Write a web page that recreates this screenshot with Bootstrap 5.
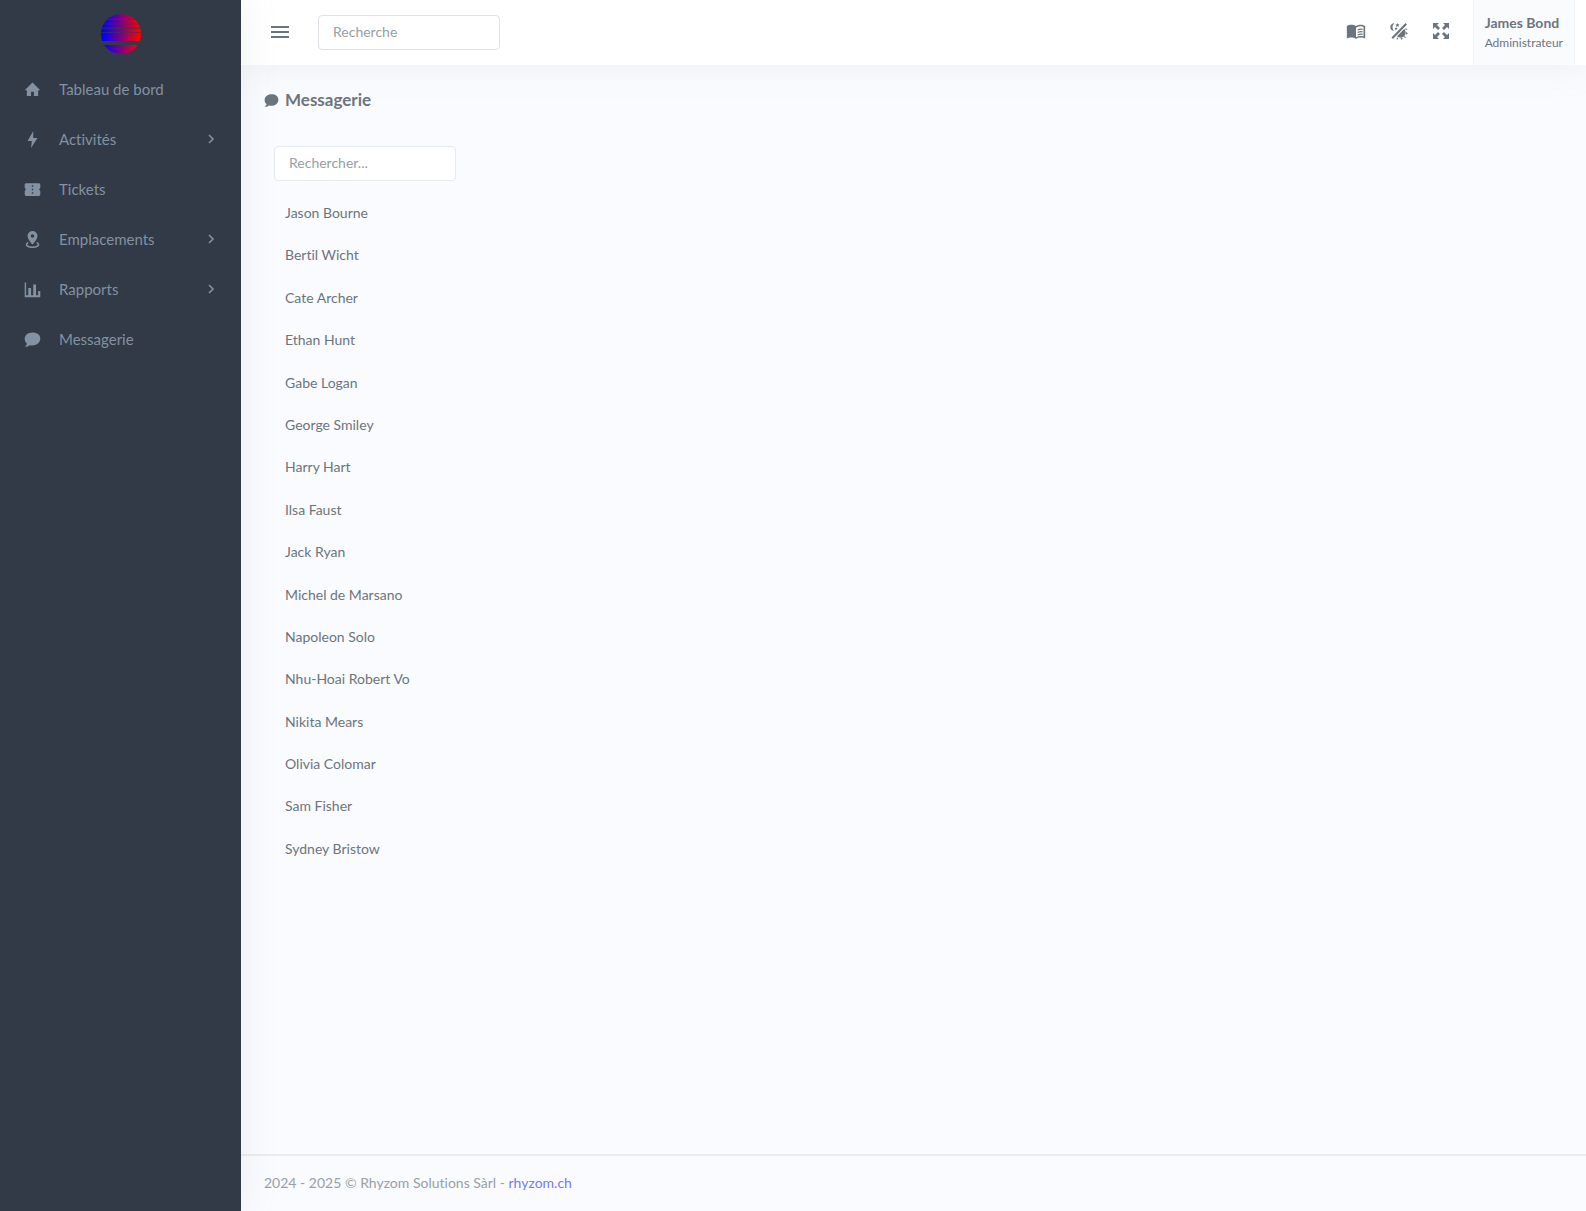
<!DOCTYPE html>
<html lang="fr">
<head>
<meta charset="utf-8">
<meta name="viewport" content="width=device-width, initial-scale=1">
<title>Messagerie</title>
<link href="https://cdn.jsdelivr.net/npm/bootstrap@5.3.0/dist/css/bootstrap.min.css" rel="stylesheet">
<style>
body{font-family:Lato,"Liberation Sans",sans-serif;font-size:14px;font-variant-ligatures:none;color:#6c757d;background:#fafbfe}
svg{display:block;fill:currentColor;flex:none}
.side-panel{width:241px;background:#313a46;box-shadow:0 0 35px rgba(154,161,171,.15);z-index:2;flex:none}
.brand-link{height:64px;padding-top:14px}
.side-link{height:50px;padding:0 22px 0 24px;gap:18px;font-size:15px;color:#8391a2;text-decoration:none}
.side-link:hover{color:#bccee4}
.top-panel{height:65px;padding:0 11px 0 29px;background:#fff;box-shadow:0 0 35px rgba(154,161,171,.15)}
.form-control{width:182px;height:35px;padding:0 14px 2px;font-size:14px;border-color:#dee2e6;border-radius:4px}
.form-control::placeholder{color:#98a0a6}
.people .form-control{border-color:#e6e9ee}
.icon-btn{background:none;border:0;padding:0 0 3px;color:#6c757d}
.tools{gap:24px;margin-right:23px}
.user-link{padding:0 11px;background:#fafbfd;border:solid #f1f3fa;border-width:0 1px;color:#6c757d;text-decoration:none}
.user-name{font-size:14px;line-height:20px}
.user-role{font-size:12px;line-height:20px}
.page-title{font-size:17px;line-height:22px;gap:6px;margin:24px 23px 35px}
.people{padding:0 33px}
.people-list{margin:11px}
.people-list a{display:block;line-height:1.6;padding:10px 0;color:#6c757d;text-decoration:none}
.page-foot{padding:16px 23px 17px;border-top:2px solid #e9ecf1;line-height:22px;color:#98a0a6}
.page-foot a{color:#727cf5;text-decoration:none}
</style>
<script src="https://cdn.jsdelivr.net/npm/bootstrap@5.3.0/dist/js/bootstrap.bundle.min.js"></script>
</head>
<body>
<div class="d-flex min-vh-100">
<aside class="side-panel position-relative">
<a href="#" class="brand-link d-flex justify-content-center" aria-label="Accueil">
<svg width="40" height="40" viewBox="0 0 40 40"><defs><linearGradient id="sun"><stop offset="0.05" stop-color="#00f"/><stop offset="0.95" stop-color="#f00"/></linearGradient><clipPath id="disc"><circle cx="20" cy="20" r="20"/></clipPath></defs><g clip-path="url(#disc)"><path fill="url(#sun)" d="M0 0H40V27H0ZM0 31H40V40H0Z"/><path fill="#313a46" opacity=".6" d="M0 5H40V6H0ZM0 9.500H40V10.500H0ZM0 13.500H40V15H0ZM0 18H40V19H0Z"/></g></svg></a>
<nav aria-label="Menu principal">
<a href="#" class="side-link d-flex align-items-center"><svg width="17" height="17" viewBox="0 0 24 24"><path d="M10 21v-6h4v6h6v-8h3L12 2 1 13h3v8z"/></svg>Tableau de bord</a>
<a href="#" class="side-link d-flex align-items-center"><svg width="17" height="17" viewBox="0 0 24 24"><path d="M13 0 5 14h6l-1 10 9-14h-6z"/></svg><span class="flex-grow-1">Activités</span><svg width="16" height="16" viewBox="0 0 16 16"><path d="m6 4 4 4-4 4" fill="none" stroke="currentColor" stroke-width="1.600"/></svg></a>
<a href="#" class="side-link d-flex align-items-center"><svg width="17" height="17" viewBox="0 0 24 24"><path fill-rule="evenodd" d="M3 3H21Q23 3 23 5V10Q20 12 23 14V19Q23 21 21 21H3Q1 21 1 19V14Q4 12 1 10V5Q1 3 3 3ZM11 6V8H13V6ZM11 11V13H13V11ZM11 16V18H13V16Z"/></svg>Tickets</a>
<a href="#" class="side-link d-flex align-items-center"><svg width="17" height="17" viewBox="0 0 24 24"><path fill-rule="evenodd" d="M12 0a7 7 0 0 1 7 7c0 5-7 12-7 12S5 12 5 7a7 7 0 0 1 7-7Zm0 4.500a2.500 2.500 0 1 0 0 5 2.500 2.500 0 1 0 0-5Z"/><path d="M6 16C0 20 6 23 12 23S24 20 18 16" fill="none" stroke="currentColor" stroke-width="2.200"/></svg><span class="flex-grow-1">Emplacements</span><svg width="16" height="16" viewBox="0 0 16 16"><path d="m6 4 4 4-4 4" fill="none" stroke="currentColor" stroke-width="1.600"/></svg></a>
<a href="#" class="side-link d-flex align-items-center"><svg width="17" height="17" viewBox="0 0 24 24"><path d="M1 2h2v18h3V10h4v10h3V5h4v15h3v-6h3v9H1z"/></svg><span class="flex-grow-1">Rapports</span><svg width="16" height="16" viewBox="0 0 16 16"><path d="m6 4 4 4-4 4" fill="none" stroke="currentColor" stroke-width="1.600"/></svg></a>
<a href="#" class="side-link d-flex align-items-center"><svg width="17" height="17" viewBox="0 0 24 24"><path d="M12 2C5.500 2 1 6 1 11c0 3 1 5 3 6.500C4 19 3 20.500 1 22c3 .5 5.500-.5 7-2 8 2 15-3 15-9S18.500 2 12 2Z"/></svg>Messagerie</a>
</nav>
</aside>
<div class="flex-grow-1 d-flex flex-column">
<header class="top-panel d-flex align-items-center">
<button class="icon-btn me-4" type="button" aria-label="Menu"><svg width="20" height="20" viewBox="0 0 20 20"><path d="M1 5h18v2H1zM1 10h18v2H1zM1 15h18v2H1z"/></svg></button>
<input class="form-control ms-1" type="search" placeholder="Recherche" aria-label="Recherche">
<div class="tools d-flex align-items-center ms-auto">
<button class="icon-btn" type="button" aria-label="Documentation"><svg width="20" height="20" viewBox="0 0 24 24"><path d="M21 5c-3-1-6.500-.6-9 1-3-2-8-2-11 0v15c3-1.500 8-1.500 11 .5 3-2 8-2 11-.500V6zM21 18.500c-3-1-6.500-.4-9 1V8c3-1.800 6-2 9-1zM14 10q3-1.300 6-.8v1.500q-3-.4-6 .8zM14 13q3-1.300 6-.8v1.500q-3-.4-6 .8zM14 16q3-1.300 6-.8v1.500q-3-.4-6 .8z"/></svg></button>
<button class="icon-btn" type="button" aria-label="Thème"><svg width="18" height="18" viewBox="0 0 18 18"><path d="M4.500 1C-1 2-1 8 4 9 1.500 6 2.500 3 4.500 1ZM15.500 1 17 2.500 3 17 1.500 15.500ZM7.500 1l.6 1.300 1.400.2-1 1 .2 1.400-1.200-.7-1.300.7.3-1.400-1-1 1.400-.2ZM6 5l.5 1 1 .2-.8.7.2 1L6 7.500l-1 .4.2-1-.7-.7 1-.2ZM14.200 7A5 5 0 0 1 7 14.200ZM15.500 6l2 1.500-2 .5ZM16 10l2 1.200-2 1.200ZM14.500 14l1.800 2-2.500-.8ZM10.500 16h2.400l-1.200 2ZM6.500 15.500l2 .5-1.500 2Z"/></svg></button>
<button class="icon-btn" type="button" aria-label="Plein écran"><svg width="18" height="18" viewBox="0 0 18 18"><path d="M1 1h6L5 3l3 3-2 2-3-3-2 2zM17 1v6l-2-2-3 3-2-2 3-3-2-2zM1 17v-6l2 2 3-3 2 2-3 3 2 2zM17 17h-6l2-2-3-3 2-2 3 3 2-2z"/></svg></button>
</div>
<a href="#" class="user-link h-100 d-flex flex-column justify-content-center"><span class="user-name fw-bold">James Bond</span><span class="user-role">Administrateur</span></a>
</header>
<main class="flex-grow-1">
<h1 class="page-title d-flex align-items-center fw-bold"><svg width="15" height="15" viewBox="0 0 24 24"><path d="M12 2C5.500 2 1 6 1 11c0 3 1 5 3 6.500C4 19 3 20.500 1 22c3 .5 5.500-.5 7-2 8 2 15-3 15-9S18.500 2 12 2Z"/></svg>Messagerie</h1>
<section class="people">
<input class="form-control" type="search" placeholder="Rechercher..." aria-label="Rechercher un contact">
<ul class="people-list list-unstyled">
<li><a href="#">Jason Bourne</a></li><li><a href="#">Bertil Wicht</a></li><li><a href="#">Cate Archer</a></li><li><a href="#">Ethan Hunt</a></li>
<li><a href="#">Gabe Logan</a></li><li><a href="#">George Smiley</a></li><li><a href="#">Harry Hart</a></li><li><a href="#">Ilsa Faust</a></li>
<li><a href="#">Jack Ryan</a></li><li><a href="#">Michel de Marsano</a></li><li><a href="#">Napoleon Solo</a></li><li><a href="#">Nhu-Hoai Robert Vo</a></li>
<li><a href="#">Nikita Mears</a></li><li><a href="#">Olivia Colomar</a></li><li><a href="#">Sam Fisher</a></li><li><a href="#">Sydney Bristow</a></li>
</ul>
</section>
</main>
<footer class="page-foot">2024 - 2025 © Rhyzom Solutions Sàrl - <a href="#">rhyzom.ch</a></footer>
</div>
</div>
</body>
</html>
